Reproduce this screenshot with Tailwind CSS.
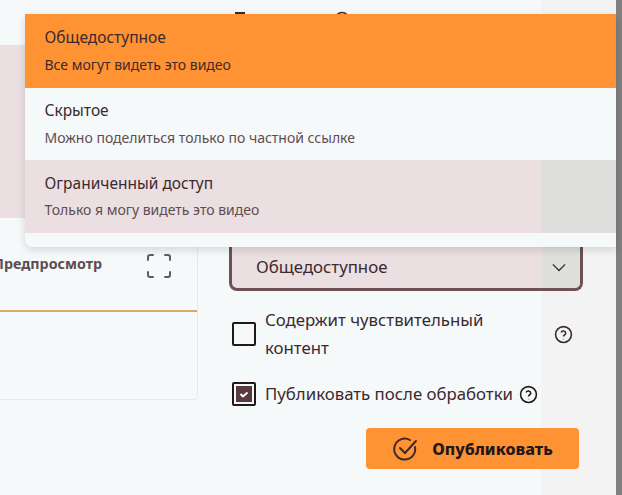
<!DOCTYPE html>
<html><head><meta charset="utf-8"><script src="https://cdn.jsdelivr.net/npm/@tailwindcss/browser@4"></script></head>
<body class="m-0 overflow-hidden">
<div class="relative w-[622px] h-[495px] overflow-hidden bg-[#f5f9fa] font-['Noto_Sans',sans-serif] text-[#3b2a2e]">
  <div class="absolute left-[235px] top-[12px] w-[10px] h-[2px] bg-[#3b2a2e]"></div>
  <svg class="absolute left-[334px] top-[11px] w-4 h-4" viewBox="0 0 16 16" fill="none" stroke="#3b2a2e" stroke-width="1.5"><circle cx="8" cy="8" r="6.5"/></svg>
  <div class="absolute left-[541px] top-0 w-[75px] h-[495px] bg-[#efeee9]/50"></div>
  <div class="absolute right-0 top-0 bottom-0 w-[6px] bg-[#808080]"></div>
  <div class="absolute left-0 top-[45px] w-[30px] h-[173px] bg-[#ebdfe1]"></div>
  <div class="absolute left-0 top-[220px] w-[198px] h-[180px] border-r border-b border-[#e6e8ea] rounded-br">
    <div class="flex items-center justify-between h-[92px] border-b-2 border-[#dca868] pr-[26px]">
      <span class="text-[14.3px] font-bold text-[#5e4d51] -ml-[7px] -mt-[3px]">Предпросмотр</span>
      <svg class="w-6 h-6 text-[#5e5e5e] mt-[1px]" viewBox="0 0 24 24" fill="none" stroke="currentColor" stroke-width="2" stroke-linecap="round"><path d="M1 6V3a2 2 0 0 1 2-2h3M18 1h3a2 2 0 0 1 2 2v3M1 18v3a2 2 0 0 0 2 2h3M18 23h3a2 2 0 0 0 2-2v-3"/></svg>
    </div>
  </div>
  <div class="absolute left-[229px] top-[225px] w-[354px] h-[66px] rounded-lg border-[3px] border-t-0 border-[#6d5155] bg-[#ebdfe1] flex items-end justify-between pl-[24px] pr-[14px] pb-[9px] overflow-hidden">
    <div class="absolute right-0 top-0 bottom-0 w-[38px] bg-[#dfdfdb]"></div>
    <span class="relative text-[16.8px] leading-[24px]">Общедоступное</span>
    <svg class="relative w-[14px] h-[14px] mb-[5px]" viewBox="0 0 16 16" fill="none" stroke="#3b2a2e" stroke-width="1.5"><path d="M1 5l7 7 7-7"/></svg>
  </div>
  <div class="absolute left-[232px] top-[306px] w-[350px] flex flex-col">
    <div class="flex items-center gap-[9px]">
      <div class="w-[24px] h-[24px] border-[2.5px] border-[#22181a] rounded-[2px]"></div>
      <div class="w-[265px] text-[16.8px] leading-[28px]">Содержит чувствительный контент</div>
      <svg class="w-[19px] h-[19px] ml-[15px]" viewBox="0 0 24 24" fill="none" stroke="#3b2a2e" stroke-width="2"><circle cx="12" cy="12" r="10"/><path d="M9 9.5a3 3 0 0 1 5.8 1c0 2-2.8 2.2-2.8 4"/><path d="M12 17.5v.5"/></svg>
    </div>
    <div class="flex items-center gap-[9px] mt-[18px]">
      <div class="w-[24px] h-[24px] border-[2.5px] border-[#22181a] rounded-[2px] p-[2px]"><div class="w-full h-full bg-[#5a3a40] flex items-center justify-center"><svg class="w-3 h-3" viewBox="0 0 12 12" fill="none" stroke="#fff" stroke-width="2"><path d="M2.5 6l2.5 2.5 4.5-4"/></svg></div></div>
      <div class="text-[16.8px] leading-[28px] flex items-center gap-[6px] whitespace-nowrap">Публиковать после обработки <svg class="w-[19px] h-[19px]" viewBox="0 0 24 24" fill="none" stroke="#22181a" stroke-width="2"><circle cx="12" cy="12" r="10"/><path d="M9 9.5a3 3 0 0 1 5.8 1c0 2-2.8 2.2-2.8 4"/><path d="M12 17.5v.5"/></svg></div>
    </div>
  </div>
  <div class="absolute left-[366px] top-[428px] w-[213px] h-[41px] bg-[#ff9233] rounded flex items-center justify-center gap-[14px]">
    <svg class="w-[26px] h-[26px]" viewBox="0 0 26 26" fill="none" stroke="#3b2a2e" stroke-width="2" stroke-linecap="round"><path d="M23 11a10.5 10.5 0 1 1-5-7"/><path d="M8 12l5 5L24 5"/></svg>
    <span class="text-[16px] font-extrabold text-[#22181a]">Опубликовать</span>
  </div>
  <div class="absolute left-[25px] top-[14px] w-[591px] h-[233px] bg-[#f5f9fa] rounded-bl-lg shadow-[0_3px_8px_rgba(0,0,0,0.14)] flex flex-col overflow-hidden">
    <div class="h-[74px] bg-[#ff9233] pl-[19.5px] pt-[11px]"><div class="text-[15.5px] leading-[24px]">Общедоступное</div><div class="text-[14px] leading-[18px] mt-[7px]">Все могут видеть это видео</div></div>
    <div class="h-[72px] pl-[19.5px] pt-[10px]"><div class="text-[15.5px] leading-[24px]">Скрытое</div><div class="text-[14px] leading-[18px] mt-[7px] text-[#5e4d51]">Можно поделиться только по частной ссылке</div></div>
    <div class="h-[73px] bg-[#ebdfe1] pl-[19.5px] pt-[11px] relative"><div class="text-[15.5px] leading-[24px]">Ограниченный доступ</div><div class="text-[14px] leading-[18px] mt-[6px] text-[#5e4d51]">Только я могу видеть это видео</div><div class="absolute right-0 top-0 bottom-0 w-[75px] bg-[#dfdfdd]"></div></div>
  </div>
</div>
</body></html>
